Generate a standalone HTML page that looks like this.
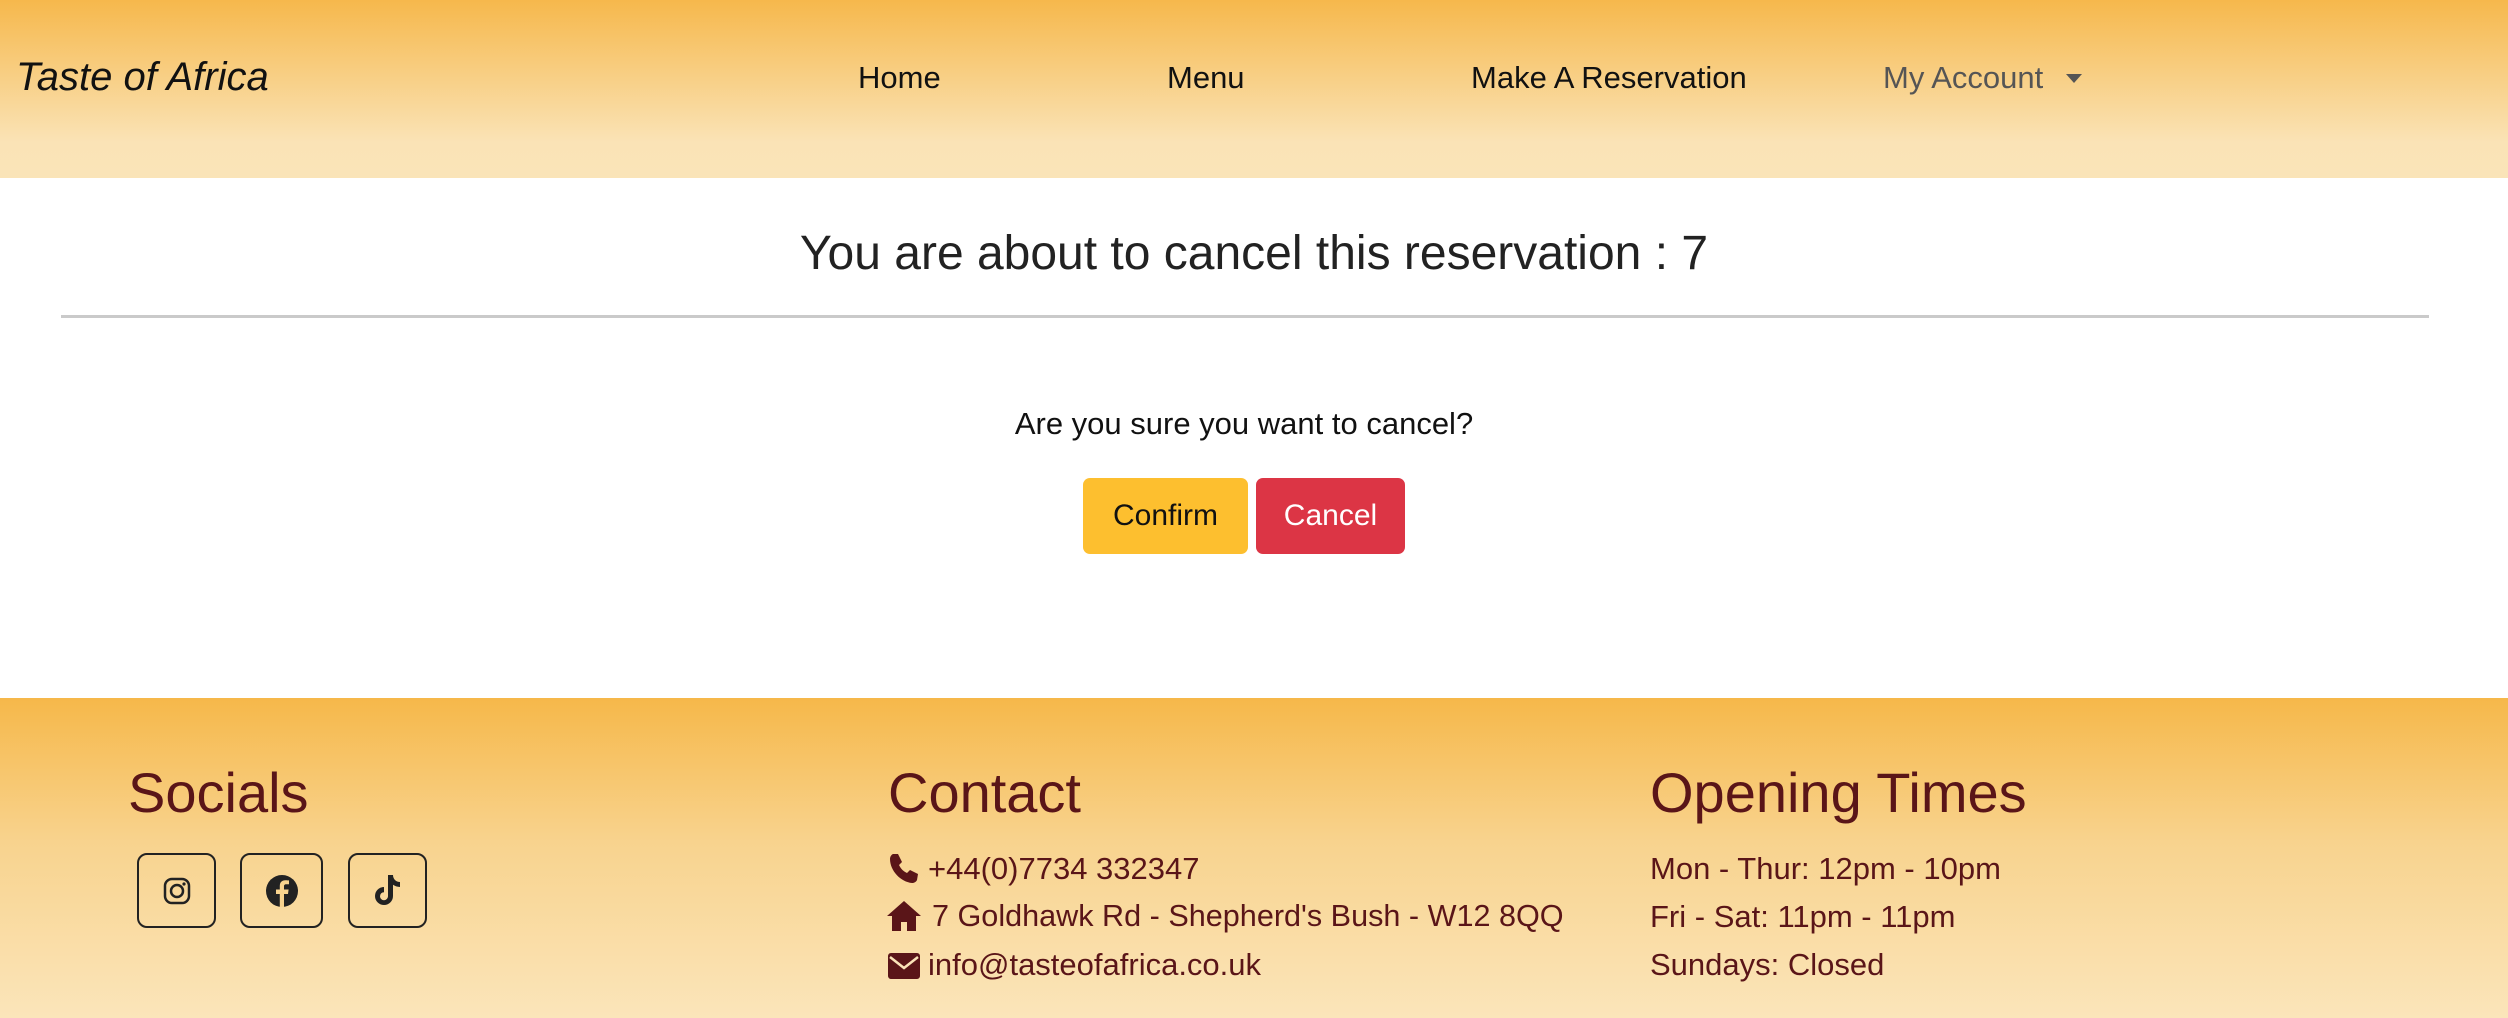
<!DOCTYPE html>
<html><head><meta charset="utf-8"><style>
*{margin:0;padding:0;box-sizing:border-box}
body{width:2508px;height:1018px;overflow:hidden;font-family:"Liberation Sans",sans-serif;background:#fff;position:relative}
.hdr{position:absolute;left:0;top:0;width:2508px;height:178px;background:linear-gradient(#f6b84c,#fae3b6 80%,#fae4b8)}
.t{position:absolute;white-space:nowrap;line-height:1}
.nav{font-size:31px;color:#111}
.ftr{position:absolute;left:0;top:698px;width:2508px;height:320px;background:linear-gradient(#f6b84a,#f8d38e 45%,#fbe5ba)}
.fc{color:#5a1518}
.box{position:absolute;top:853px;height:75px;border:2px solid #222;border-radius:10px;display:flex;align-items:center;justify-content:center}
.btn{position:absolute;top:478px;height:76px;border-radius:7px;display:flex;align-items:center;justify-content:center;font-size:30px}
</style></head><body>
<div class="hdr"></div>
<div class="t" style="left:16px;top:57px;font-size:40px;font-style:italic;color:#111">Taste of Africa</div>
<div class="t nav" style="left:858px;top:62px">Home</div>
<div class="t nav" style="left:1167px;top:62px">Menu</div>
<div class="t nav" style="left:1471px;top:62px">Make A Reservation</div>
<div class="t nav" style="left:1883px;top:62px;color:#555">My Account</div>
<div class="t" style="left:0;width:2508px;text-align:center;top:230px;font-size:48px;color:#222">You are about to cancel this reservation : 7</div>
<div style="position:absolute;left:2066px;top:74px;border-left:8px solid transparent;border-right:8px solid transparent;border-top:9px solid #555"></div>
<div style="position:absolute;left:61px;top:315px;width:2368px;height:3px;background:#cacaca"></div>
<div class="t" style="left:0;width:2488px;text-align:center;top:408px;font-size:31px;color:#111">Are you sure you want to cancel?</div>
<div class="btn" style="left:1083px;width:165px;background:#fdbf2f;color:#111">Confirm</div>
<div class="btn" style="left:1256px;width:149px;background:#dc3545;color:#fff">Cancel</div>
<div class="ftr"></div>
<div class="t fc" style="left:128px;top:765px;font-size:56px">Socials</div>
<div class="t fc" style="left:888px;top:765px;font-size:56px">Contact</div>
<div class="t fc" style="left:1650px;top:765px;font-size:56px">Opening Times</div>
<div class="box" style="left:137px;width:79px"><svg width="28" height="28" viewBox="0 0 28 28"><rect x="2" y="2" width="24" height="24" rx="7" fill="none" stroke="#222" stroke-width="2.5"/><circle cx="14" cy="14" r="6" fill="none" stroke="#222" stroke-width="2.5"/><circle cx="21" cy="7" r="1.6" fill="#222"/></svg></div>
<div class="box" style="left:240px;width:83px"><svg width="32" height="32" viewBox="0 0 32 32"><circle cx="16" cy="16" r="16" fill="#222"/><path d="M18 32V19h4l.6-4.5H18v-3c0-1.3.5-2.2 2.3-2.2H23V5.4c-.5 0-2-.2-3.6-.2-3.5 0-5.6 2-5.6 5.8v3.5H10V19h3.8v13z" fill="#f8d38e"/></svg></div>
<div class="box" style="left:348px;width:79px"><svg width="30" height="32" viewBox="0 0 30 32"><path d="M15 0h5c0 4 3 7 7 7v5c-2.7 0-5-.8-7-2.2V21a9 9 0 1 1-9-9v5.2a4 4 0 1 0 4 3.8z" fill="#222"/></svg></div>
<svg style="position:absolute;left:888px;top:852px" width="32" height="32" viewBox="0 0 32 32"><path d="M10 2l4 8-3 3c2 4 4 6 8 8l3-3 8 4-1 6c-1 2-3 3-5 3C13 30 2 19 2 7c0-2 1-4 3-5z" fill="#5a1518"/></svg>
<svg style="position:absolute;left:886px;top:900px" width="36" height="32" viewBox="0 0 36 32"><path d="M18 1L1 16h5v15h9v-9h6v9h9V16h5z" fill="#5a1518"/></svg>
<svg style="position:absolute;left:888px;top:953px" width="32" height="26" viewBox="0 0 32 26"><rect x="0" y="0" width="32" height="26" rx="3" fill="#5a1518"/><path d="M2 4l14 11L30 4" fill="none" stroke="#fbe3b8" stroke-width="2.5"/></svg>
<div class="t fc" style="left:928px;top:853px;font-size:31px">+44(0)7734 332347</div>
<div class="t fc" style="left:932px;top:901px;font-size:30.6px">7 Goldhawk Rd - Shepherd's Bush - W12 8QQ</div>
<div class="t fc" style="left:928px;top:949px;font-size:31px">info@tasteofafrica.co.uk</div>
<div class="t fc" style="left:1650px;top:853px;font-size:31px">Mon - Thur: 12pm - 10pm</div>
<div class="t fc" style="left:1650px;top:901px;font-size:31px">Fri - Sat: 11pm - 11pm</div>
<div class="t fc" style="left:1650px;top:949px;font-size:31px">Sundays: Closed</div>
</body></html>
